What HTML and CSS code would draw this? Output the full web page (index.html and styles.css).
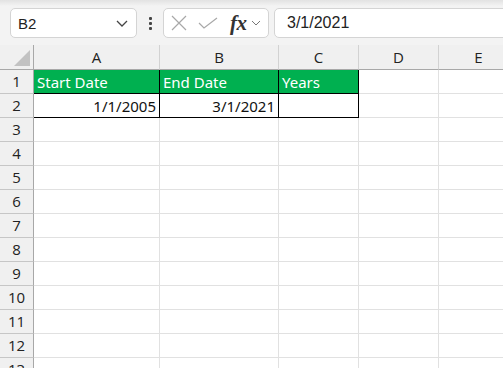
FILE: index.html
```html
<!DOCTYPE html>
<html lang="en">

<head>
    <meta charset="UTF-8">
    <title>Sheet</title>
    <link rel="stylesheet" href="styles.css">
</head>

<body>
    <div class="toolbar">
        <div class="namebox">
            <span>B2</span>
            <svg class="chev" width="12" height="7" viewBox="0 0 12 7"><path d="M1 1 L6 6 L11 1" fill="none" stroke="#444" stroke-width="1.3"/></svg>
        </div>
        <div class="dots"><i></i><i></i><i></i></div>
        <div class="fxbox">
            <svg width="16" height="16" viewBox="0 0 16 16"><path d="M1 1 L15 15 M15 1 L1 15" stroke="#a8a8a8" stroke-width="1.2"/></svg>
            <svg width="20" height="12" viewBox="0 0 20 12"><path d="M1 6 L6 11 L19 1" fill="none" stroke="#a8a8a8" stroke-width="1.2"/></svg>
            <span class="fx">fx</span>
            <svg width="10" height="6" viewBox="0 0 10 6"><path d="M1 1 L5 5 L9 1" fill="none" stroke="#777" stroke-width="1"/></svg>
        </div>
        <div class="formula">3/1/2021</div>
    </div>

    <div class="sheet">
        <div class="corner"><span class="tri"></span></div>
        <div class="colhead">A</div>
        <div class="colhead">B</div>
        <div class="colhead">C</div>
        <div class="colhead">D</div>
        <div class="colhead">E</div>
    </div>
    <div id="rows"></div>

    <script>
        // 13行分のグリッドを生成（13行目は画面下で切れる）
        var data = {
            1: [{ t: 'Start Date', c: 'hd bk' }, { t: 'End Date', c: 'hd bk' }, { t: 'Years', c: 'hd bk' }],
            2: [{ t: '1/1/2005', c: 'num bk' }, { t: '3/1/2021', c: 'num bk' }, { t: '', c: 'bk' }]
        };
        var rows = document.getElementById('rows');
        for (var r = 1; r <= 13; r++) {
            var row = document.createElement('div');
            row.className = 'sheet';
            var h = '<div class="rowhead">' + r + '</div>';
            for (var c = 0; c < 5; c++) {
                var cell = data[r] && data[r][c];
                var cls = 'cell' + (cell ? ' ' + cell.c : '');
                h += '<div class="' + cls + '">' + (cell ? cell.t : '') + '</div>';
            }
            row.innerHTML = h;
            rows.appendChild(row);
        }
    </script>
</body>

</html>
```

FILE: styles.css
```css
body {
    margin: 0;
    background: #ffffff;
    overflow: hidden;
    font-family: "Liberation Sans", Arial, sans-serif;
}

.toolbar {
    height: 45px;
    background: linear-gradient(#e2e2e2 0, #f3f3f3 6px, #f3f3f3 100%);
    display: flex;
    align-items: center;
    padding-left: 10px;
    box-sizing: border-box;
    padding-top: 1px;
}

.namebox {
    width: 127px;
    height: 30px;
    box-sizing: border-box;
    background: #fff;
    border: 1px solid #d4d4d4;
    border-radius: 5px;
    display: flex;
    align-items: center;
    justify-content: space-between;
    padding: 0 8px 0 7px;
    font-size: 15px;
    color: #222;
}

.dots {
    width: 26px;
    display: flex;
    flex-direction: column;
    align-items: center;
    gap: 2px;
}

.dots i {
    width: 3px;
    height: 3px;
    background: #444;
    border-radius: 1px;
}

.fxbox {
    width: 106px;
    height: 30px;
    box-sizing: border-box;
    background: #fff;
    border: 1px solid #d4d4d4;
    border-radius: 5px;
    display: flex;
    align-items: center;
    padding: 0 4px 0 7px;
    gap: 11px;
}

.fx {
    font-family: "Liberation Serif", serif;
    font-style: italic;
    font-weight: bold;
    font-size: 21px;
    line-height: 20px;
    color: #333;
    margin-left: 1px;
    margin-right: -7px;
    letter-spacing: -0.5px;
}

.formula {
    flex: 1;
    margin-left: 5px;
    margin-right: -10px;
    height: 30px;
    box-sizing: border-box;
    background: #fff;
    border: 1px solid #d4d4d4;
    border-radius: 5px;
    padding-left: 12px;
    line-height: 28px;
    font-size: 16px;
    color: #222;
}

.sheet {
    display: grid;
    grid-template-columns: 34px 126px 119px 80px 80px 80px;
    font-family: "Open Sans", sans-serif;
}

.corner,
.colhead {
    height: 24px;
    background: #f0f0f0;
    border-bottom: 1px solid #a8a8a8;
    border-right: 1px solid #d2d2d2;
}

.corner {
    position: relative;
    border-right-color: #a8a8a8;
}

.tri {
    position: absolute;
    right: 3px;
    bottom: 3px;
    width: 0;
    height: 0;
    border-left: 16px solid transparent;
    border-bottom: 16px solid #c2c2c2;
}

.colhead {
    text-align: center;
    font-size: 15px;
    line-height: 25px;
    color: #222;
}

.rowhead {
    height: 23px;
    background: #f0f0f0;
    border-right: 1px solid #a8a8a8;
    border-bottom: 1px solid #c6c6c6;
    text-align: center;
    font-size: 15px;
    line-height: 23px;
    color: #222;
}

.cell {
    height: 23px;
    border-right: 1px solid #e1e1e1;
    border-bottom: 1px solid #e1e1e1;
    font-family: "Noto Sans", sans-serif;
    font-size: 15px;
    line-height: 24px;
    padding: 0 3px;
    white-space: nowrap;
    color: #111;
}

.hd {
    background: #00b050;
    color: #fff;
}

.num {
    text-align: right;
}

.bk {
    border-right-color: #000;
    border-bottom-color: #000;
}
```
